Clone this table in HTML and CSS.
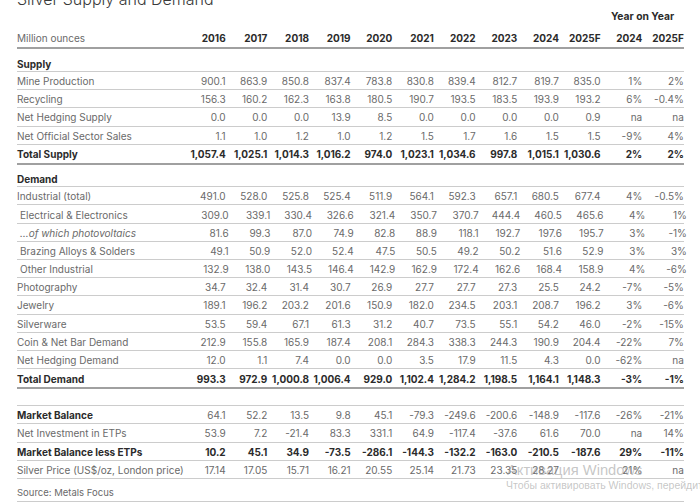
FILE: index.html
```html
<!DOCTYPE html>
<html lang="en">
<head>
<meta charset="utf-8">
<title>Silver Supply and Demand</title>
<link rel="stylesheet" href="styles.css">
</head>
<body>
<div class="page">
  <h1 class="title">Silver Supply and Demand</h1>
  <div class="yoy-row"><span class="yoy">Year on Year</span></div>

  <div class="row hdr">
    <div class="lbl">Million ounces</div>
    <div class="n">2016</div><div class="n">2017</div><div class="n">2018</div><div class="n">2019</div><div class="n">2020</div><div class="n">2021</div><div class="n">2022</div><div class="n">2023</div><div class="n">2024</div><div class="n">2025F</div><div class="n">2024</div><div class="n">2025F</div>
  </div>

  <div class="row sec"><div class="lbl">Supply</div></div>
  <div class="row"><div class="lbl">Mine Production</div><div class="n">900.1</div><div class="n">863.9</div><div class="n">850.8</div><div class="n">837.4</div><div class="n">783.8</div><div class="n">830.8</div><div class="n">839.4</div><div class="n">812.7</div><div class="n">819.7</div><div class="n">835.0</div><div class="n">1%</div><div class="n">2%</div></div>
  <div class="row"><div class="lbl">Recycling</div><div class="n">156.3</div><div class="n">160.2</div><div class="n">162.3</div><div class="n">163.8</div><div class="n">180.5</div><div class="n">190.7</div><div class="n">193.5</div><div class="n">183.5</div><div class="n">193.9</div><div class="n">193.2</div><div class="n">6%</div><div class="n">-0.4%</div></div>
  <div class="row"><div class="lbl">Net Hedging Supply</div><div class="n">0.0</div><div class="n">0.0</div><div class="n">0.0</div><div class="n">13.9</div><div class="n">8.5</div><div class="n">0.0</div><div class="n">0.0</div><div class="n">0.0</div><div class="n">0.0</div><div class="n">0.9</div><div class="n">na</div><div class="n">na</div></div>
  <div class="row"><div class="lbl">Net Official Sector Sales</div><div class="n">1.1</div><div class="n">1.0</div><div class="n">1.2</div><div class="n">1.0</div><div class="n">1.2</div><div class="n">1.5</div><div class="n">1.7</div><div class="n">1.6</div><div class="n">1.5</div><div class="n">1.5</div><div class="n">-9%</div><div class="n">4%</div></div>
  <div class="row total"><div class="lbl">Total Supply</div><div class="n">1,057.4</div><div class="n">1,025.1</div><div class="n">1,014.3</div><div class="n">1,016.2</div><div class="n">974.0</div><div class="n">1,023.1</div><div class="n">1,034.6</div><div class="n">997.8</div><div class="n">1,015.1</div><div class="n">1,030.6</div><div class="n">2%</div><div class="n">2%</div></div>

  <div class="row sec sec2"><div class="lbl">Demand</div></div>
  <div class="row"><div class="lbl">Industrial (total)</div><div class="n">491.0</div><div class="n">528.0</div><div class="n">525.8</div><div class="n">525.4</div><div class="n">511.9</div><div class="n">564.1</div><div class="n">592.3</div><div class="n">657.1</div><div class="n">680.5</div><div class="n">677.4</div><div class="n">4%</div><div class="n">-0.5%</div></div>
  <div class="row"><div class="lbl sub">Electrical &amp; Electronics</div><div class="n">309.0</div><div class="n">339.1</div><div class="n">330.4</div><div class="n">326.6</div><div class="n">321.4</div><div class="n">350.7</div><div class="n">370.7</div><div class="n">444.4</div><div class="n">460.5</div><div class="n">465.6</div><div class="n">4%</div><div class="n">1%</div></div>
  <div class="row"><div class="lbl sub it">…of which photovoltaics</div><div class="n">81.6</div><div class="n">99.3</div><div class="n">87.0</div><div class="n">74.9</div><div class="n">82.8</div><div class="n">88.9</div><div class="n">118.1</div><div class="n">192.7</div><div class="n">197.6</div><div class="n">195.7</div><div class="n">3%</div><div class="n">-1%</div></div>
  <div class="row"><div class="lbl sub">Brazing Alloys &amp; Solders</div><div class="n">49.1</div><div class="n">50.9</div><div class="n">52.0</div><div class="n">52.4</div><div class="n">47.5</div><div class="n">50.5</div><div class="n">49.2</div><div class="n">50.2</div><div class="n">51.6</div><div class="n">52.9</div><div class="n">3%</div><div class="n">3%</div></div>
  <div class="row"><div class="lbl sub">Other Industrial</div><div class="n">132.9</div><div class="n">138.0</div><div class="n">143.5</div><div class="n">146.4</div><div class="n">142.9</div><div class="n">162.9</div><div class="n">172.4</div><div class="n">162.6</div><div class="n">168.4</div><div class="n">158.9</div><div class="n">4%</div><div class="n">-6%</div></div>
  <div class="row"><div class="lbl">Photography</div><div class="n">34.7</div><div class="n">32.4</div><div class="n">31.4</div><div class="n">30.7</div><div class="n">26.9</div><div class="n">27.7</div><div class="n">27.7</div><div class="n">27.3</div><div class="n">25.5</div><div class="n">24.2</div><div class="n">-7%</div><div class="n">-5%</div></div>
  <div class="row"><div class="lbl">Jewelry</div><div class="n">189.1</div><div class="n">196.2</div><div class="n">203.2</div><div class="n">201.6</div><div class="n">150.9</div><div class="n">182.0</div><div class="n">234.5</div><div class="n">203.1</div><div class="n">208.7</div><div class="n">196.2</div><div class="n">3%</div><div class="n">-6%</div></div>
  <div class="row"><div class="lbl">Silverware</div><div class="n">53.5</div><div class="n">59.4</div><div class="n">67.1</div><div class="n">61.3</div><div class="n">31.2</div><div class="n">40.7</div><div class="n">73.5</div><div class="n">55.1</div><div class="n">54.2</div><div class="n">46.0</div><div class="n">-2%</div><div class="n">-15%</div></div>
  <div class="row"><div class="lbl">Coin &amp; Net Bar Demand</div><div class="n">212.9</div><div class="n">155.8</div><div class="n">165.9</div><div class="n">187.4</div><div class="n">208.1</div><div class="n">284.3</div><div class="n">338.3</div><div class="n">244.3</div><div class="n">190.9</div><div class="n">204.4</div><div class="n">-22%</div><div class="n">7%</div></div>
  <div class="row"><div class="lbl">Net Hedging Demand</div><div class="n">12.0</div><div class="n">1.1</div><div class="n">7.4</div><div class="n">0.0</div><div class="n">0.0</div><div class="n">3.5</div><div class="n">17.9</div><div class="n">11.5</div><div class="n">4.3</div><div class="n">0.0</div><div class="n">-62%</div><div class="n">na</div></div>
  <div class="row total"><div class="lbl">Total Demand</div><div class="n">993.3</div><div class="n">972.9</div><div class="n">1,000.8</div><div class="n">1,006.4</div><div class="n">929.0</div><div class="n">1,102.4</div><div class="n">1,284.2</div><div class="n">1,198.5</div><div class="n">1,164.1</div><div class="n">1,148.3</div><div class="n">-3%</div><div class="n">-1%</div></div>

  <div class="row bold first"><div class="lbl">Market Balance</div><div class="n">64.1</div><div class="n">52.2</div><div class="n">13.5</div><div class="n">9.8</div><div class="n">45.1</div><div class="n">-79.3</div><div class="n">-249.6</div><div class="n">-200.6</div><div class="n">-148.9</div><div class="n">-117.6</div><div class="n">-26%</div><div class="n">-21%</div></div>
  <div class="row"><div class="lbl">Net Investment in ETPs</div><div class="n">53.9</div><div class="n">7.2</div><div class="n">-21.4</div><div class="n">83.3</div><div class="n">331.1</div><div class="n">64.9</div><div class="n">-117.4</div><div class="n">-37.6</div><div class="n">61.6</div><div class="n">70.0</div><div class="n">na</div><div class="n">14%</div></div>
  <div class="row bold allbold"><div class="lbl">Market Balance less ETPs</div><div class="n">10.2</div><div class="n">45.1</div><div class="n">34.9</div><div class="n">-73.5</div><div class="n">-286.1</div><div class="n">-144.3</div><div class="n">-132.2</div><div class="n">-163.0</div><div class="n">-210.5</div><div class="n">-187.6</div><div class="n">29%</div><div class="n">-11%</div></div>
  <div class="row"><div class="lbl">Silver Price (US$/oz, London price)</div><div class="n">17.14</div><div class="n">17.05</div><div class="n">15.71</div><div class="n">16.21</div><div class="n">20.55</div><div class="n">25.14</div><div class="n">21.73</div><div class="n">23.35</div><div class="n price24">28.27</div><div class="n"></div><div class="n">21%</div><div class="n">na</div></div>
  <div class="row source"><div class="lbl">Source: Metals Focus</div></div>
</div>

<div class="watermark">
  <div class="wm1">Активация Windows</div>
  <div class="wm2">Чтобы активировать Windows, перейдите</div>
</div>
</body>
</html>
```

FILE: styles.css
```css
html, body {
  margin: 0;
  padding: 0;
  background: #ffffff;
  overflow: hidden;
}

body {
  font-family: "Inter", "Liberation Sans", sans-serif;
  font-size: 10px;
  color: #6a6a6a;
  width: 700px;
  height: 504px;
  position: relative;
}

.page {
  width: 667px;
  margin-left: 17px;
}

.title {
  margin: -11px 0 0 0;
  font-size: 16px;
  line-height: 20px;
  font-weight: 300;
  color: #3a3a3a;
}

.yoy-row {
  height: 13px;
  display: flex;
  justify-content: flex-end;
  align-items: center;
}

.yoy {
  width: 83px;
  text-align: center;
  font-weight: 700;
  color: #2b2b2b;
  font-size: 10.3px;
  padding-left: 6px;
}

.row {
  display: flex;
  align-items: center;
  box-sizing: border-box;
  height: 18.2px;
  padding-top: 1px;
  border-bottom: 1px solid #cccccc;
  line-height: 12px;
}

.lbl {
  width: 167px;
  flex: none;
  white-space: nowrap;
}

.n {
  width: 41.667px;
  flex: none;
  text-align: right;
  white-space: nowrap;
}

.sub {
  padding-left: 3px;
}

.it {
  font-style: italic;
}

.hdr {
  height: 27px;
  padding-top: 7px;
  border-bottom: 2px solid #a0a0a0;
  font-weight: 700;
  color: #2b2b2b;
}

.hdr .lbl {
  font-weight: 400;
  color: #6a6a6a;
}

.sec {
  height: 23px;
  padding-top: 7px;
  font-weight: 700;
  color: #2b2b2b;
}

.sec2 {
  height: 22.5px;
  padding-top: 6px;
}

.total {
  height: 20px;
  border-bottom: 2px solid #a0a0a0;
  font-weight: 700;
  color: #2b2b2b;
}

.bold .lbl {
  font-weight: 700;
  color: #2b2b2b;
}

.allbold {
  font-weight: 700;
  color: #2b2b2b;
}

.first {
  margin-top: 16px;
  border-top: 1px solid #cccccc;
  height: 19.2px;
}

.source {
  height: 23px;
  padding-top: 7px;
  font-size: 9.5px;
}

.source .lbl {
  width: auto;
}

.watermark {
  position: absolute;
  left: 507px;
  top: 461px;
  pointer-events: none;
  white-space: nowrap;
  font-family: "Liberation Sans", "DejaVu Sans", sans-serif;
}

.wm1 {
  font-size: 14.7px;
  line-height: 18px;
  color: rgba(150, 150, 150, 0.55);
}

.wm2 {
  font-size: 10.5px;
  line-height: 12px;
  margin-left: -1px;
  color: rgba(150, 150, 150, 0.55);
}
```
